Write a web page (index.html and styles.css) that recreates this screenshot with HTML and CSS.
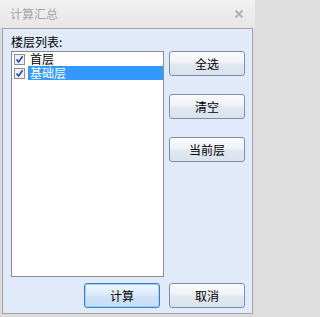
FILE: index.html
```html
<!DOCTYPE html>
<html lang="zh">
<head>
<meta charset="utf-8">
<title>计算汇总</title>
<link rel="stylesheet" href="styles.css">
</head>
<body>
<div class="window">
  <div class="titlebar">
    <span class="title">计算汇总</span>
    <svg class="close" width="10" height="10" viewBox="0 0 10 10"><path d="M1.5 1.5 L8.5 8.5 M8.5 1.5 L1.5 8.5" stroke="#b4b4b4" stroke-width="2.2" fill="none"/></svg>
  </div>
  <div class="client">
    <div class="label">楼层列表:</div>
    <div class="main">
      <div class="listbox">
        <div class="item">
          <svg class="check" width="11" height="11" viewBox="0 0 11 11"><rect x="0.5" y="0.5" width="10" height="10" fill="#eef0f3" stroke="#8e8f91"/><path d="M2.5 5.5 L4.6 8 L8.6 2.2" stroke="#2a4aa6" stroke-width="1.6" fill="none"/></svg>
          <span class="text">首层</span>
        </div>
        <div class="item selected">
          <svg class="check" width="11" height="11" viewBox="0 0 11 11"><rect x="0.5" y="0.5" width="10" height="10" fill="#eef0f3" stroke="#8e8f91"/><path d="M2.5 5.5 L4.6 8 L8.6 2.2" stroke="#2a4aa6" stroke-width="1.6" fill="none"/></svg>
          <span class="text">基础层</span>
        </div>
      </div>
      <div class="side">
        <button class="btn">全选</button>
        <button class="btn">清空</button>
        <button class="btn">当前层</button>
      </div>
    </div>
    <div class="footer">
      <button class="btn default">计算</button>
      <button class="btn">取消</button>
    </div>
  </div>
</div>
</body>
</html>
```
FILE: styles.css
```css
html, body {
  margin: 0;
  padding: 0;
  background: #dedede;
}
body {
  font-family: "Noto Sans CJK SC", "DejaVu Sans", sans-serif;
  font-size: 12px;
  color: #000;
}
.window {
  width: 255px;
  height: 317px;
  box-sizing: border-box;
  background: #dcdcdc;
  display: flex;
  flex-direction: column;
}
.titlebar {
  height: 28px;
  flex: none;
  display: flex;
  align-items: center;
  justify-content: space-between;
  padding: 0 10px 0 10px;
  background: linear-gradient(to bottom, #f2f2f2, #e6e6e6);
  box-sizing: border-box;
}
.title {
  color: #a6a6a6;
  font-size: 12px;
  line-height: 14px;
}
.close {
  display: block;
  margin-right: 1px;
}
.client {
  margin: 0 2px;
  height: 286px;
  box-sizing: border-box;
  border: 1px solid #a3a3a3;
  background: #e0eafa;
  padding: 5px 7px 0 8px;
  display: flex;
  flex-direction: column;
}
.label {
  height: 17px;
  line-height: 16px;
}
.main {
  display: flex;
  gap: 5px;
}
.listbox {
  width: 154px;
  height: 226px;
  box-sizing: border-box;
  border: 1px solid #8c8c8c;
  background: #fff;
  padding-top: 0;
}
.item {
  display: flex;
  align-items: center;
  height: 14px;
  padding-left: 2px;
}
.check {
  display: block;
  flex: none;
  margin-right: 3px;
}
.text {
  flex: 1;
  height: 14px;
  line-height: 14px;
  padding-left: 2px;
}
.item.selected .text {
  background: #3399ff;
  color: #fff;
}
.side {
  display: flex;
  flex-direction: column;
  gap: 18px;
}
.btn {
  width: 76px;
  height: 25px;
  box-sizing: border-box;
  border: 1px solid #7d8ea8;
  border-radius: 3px;
  background: linear-gradient(to bottom, #fbfcfd 0%, #eef2f7 45%, #e1e8f1 55%, #d9e2ed 100%);
  font-family: inherit;
  font-size: 12px;
  color: #000;
  padding: 0;
  margin: 0;
  line-height: 14px;
}
.btn.default {
  border-color: #3c7fc4;
  box-shadow: inset 0 0 0 1px #9fd0f5;
  background: linear-gradient(to bottom, #eef6fd 0%, #dcebf9 45%, #cfe3f6 55%, #c6ddf3 100%);
}
.footer {
  margin-top: 6px;
  display: flex;
  justify-content: flex-end;
  gap: 9px;
}
```
